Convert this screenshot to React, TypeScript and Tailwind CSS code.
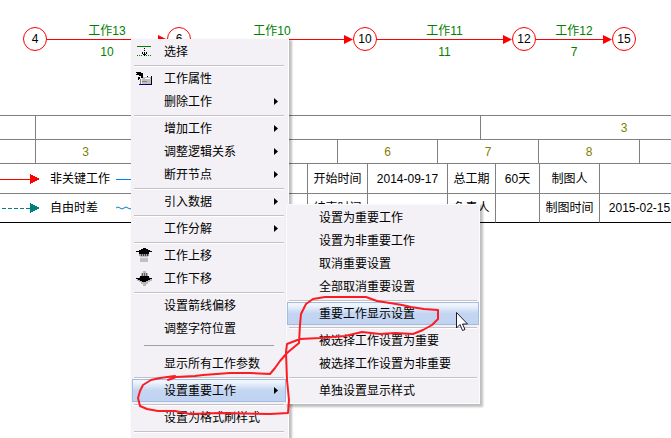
import { ReactNode } from 'react'
import clsx from 'clsx'

type Entry = {
    label?: string
    icon?: ReactNode
    submenu?: boolean
    active?: boolean
    divider?: 'normal' | 'wide'
}

const SelectIcon = () => (
    <svg width="16" height="16" shapeRendering="crispEdges">
        <path d="M1 2.5h14" stroke="#008000" />
        <path d="M1 11.5h1m1 0h1m1 0h1m4 0h1m1 0h1m1 0h1" stroke="#008000" />
        <path d="M8.5 4v1m0 1v1m0 1v4M6 8.5h1m3 0h1M6 9.5h1m3 0h1M7 10.5h3" stroke="#000" />
    </svg>
)

const PropertiesIcon = () => (
    <svg width="17" height="16" shapeRendering="crispEdges">
        <path d="M6 6h10v7H6z" fill="#c0c0c0" />
        <path d="M8 5.5h7M9 7.5h5" stroke="#fff" />
        <path d="M0 1h5v1h2v5H5V5H3V4H0V3h1V2H0z" fill="#000" />
        <path d="M2 6h2v2H3v1H2zM11 5h1v1h-1zM15 5h1v9h-1z" fill="#000" />
        <path d="M4.5 8v5M6 10.5h5" stroke="#808080" />
        <path d="M3 13.5h12" stroke="#000" />
        <path d="M3 13.5h2m2 0h3m2 0h2" stroke="#0000c0" />
    </svg>
)

const MoveUpIcon = () => (
    <svg width="16" height="16" shapeRendering="crispEdges">
        <path d="M4 7h8v7H4z" fill="#c0c0c0" />
        <path d="M3 6h10v2H3z" fill="#a0a0a0" />
        <path d="M7 0h3v1h2v1h2v1h2v1h-3v2H3V4H0V3h3V2h2V1h2z" fill="#000" />
        <path d="M5.5 6v2m2-2v2m2-2v2m2-2v2" stroke="#404040" />
        <path d="M4 9.5h8" stroke="#e4e4e4" />
    </svg>
)

const MoveDownIcon = () => (
    <svg width="16" height="16" shapeRendering="crispEdges">
        <path d="M7 0h3v2h2v4h2v2h2v2h-2v1h-2v2h-2v2H7v-2H5v-2H3v-1H1V8h2V6h2V2h2z" fill="#b8b8b8" />
        <path d="M4 5h9v2h3v1h-2v1h-2v1h-2v1H6v-1H4V9H2V8H0V7h4z" fill="#000" />
        <path d="M6.5 2v3m2-3v3m2-3v3" stroke="#606060" />
    </svg>
)

const mainMenu: Entry[] = [
    { label: '选择', icon: <SelectIcon /> },
    { divider: 'normal' },
    { label: '工作属性', icon: <PropertiesIcon /> },
    { label: '删除工作', submenu: true },
    { divider: 'normal' },
    { label: '增加工作', submenu: true },
    { label: '调整逻辑关系', submenu: true },
    { label: '断开节点', submenu: true },
    { divider: 'normal' },
    { label: '引入数据', submenu: true },
    { divider: 'normal' },
    { label: '工作分解', submenu: true },
    { divider: 'normal' },
    { label: '工作上移', icon: <MoveUpIcon /> },
    { label: '工作下移', icon: <MoveDownIcon /> },
    { divider: 'normal' },
    { label: '设置箭线偏移' },
    { label: '调整字符位置' },
    { divider: 'wide' },
    { label: '显示所有工作参数' },
    { divider: 'normal' },
    { label: '设置重要工作', submenu: true, active: true },
    { divider: 'normal' },
    { label: '设置为格式刷样式' },
    { divider: 'normal' },
]

const importantMenu: Entry[] = [
    { label: '设置为重要工作' },
    { label: '设置为非重要工作' },
    { label: '取消重要设置' },
    { label: '全部取消重要设置' },
    { divider: 'normal' },
    { label: '重要工作显示设置', active: true },
    { divider: 'normal' },
    { label: '被选择工作设置为重要' },
    { label: '被选择工作设置为非重要' },
    { divider: 'normal' },
    { label: '单独设置显示样式' },
]

const Menu = ({ entries, className }: { entries: Entry[]; className: string }) => (
    <div
        role="menu"
        className={clsx(
            'absolute bg-[#f3f1f5] shadow-[2px_2px_2px_1px_rgba(0,0,0,0.25)]',
            className
        )}
    >
        {entries.map(({ label, icon, submenu, active, divider }, i) =>
            divider ? (
                <div
                    key={i}
                    role="separator"
                    className={
                        divider === 'wide' ? 'h-3 px-3 pt-[5px]' : 'h-1 px-[2px] pt-[2px]'
                    }
                >
                    <div
                        className={clsx(
                            'border-t',
                            divider === 'wide'
                                ? 'border-[#a0a0a0]'
                                : 'h-[2px] border-[#c4c2c6] bg-white'
                        )}
                    />
                </div>
            ) : (
                <button
                    key={i}
                    type="button"
                    role="menuitem"
                    className={clsx(
                        'flex h-[23px] w-full items-center border pr-[7px] text-left whitespace-nowrap',
                        active
                            ? 'border-[#a3bbdf] bg-linear-to-b from-[#eff5fd] from-10% via-[#c3d5f1] via-50% to-[#c0d3f1]'
                            : 'border-transparent'
                    )}
                >
                    <span className="flex w-[31px] shrink-0 pl-[3px]">{icon}</span>
                    <span className="grow">{label}</span>
                    {submenu && (
                        <svg width="4" height="7" className="shrink-0">
                            <path d="M0 0l4 3.5L0 7z" />
                        </svg>
                    )}
                </button>
            )
        )}
    </div>
)

const Node = ({ children }: { children: ReactNode }) => (
    <div className="flex size-6 shrink-0 items-center justify-center rounded-full border border-[#f00]">
        {children}
    </div>
)

const Edge = ({
    name,
    days,
    className,
}: {
    name: string
    days?: string
    className: string
}) => (
    <div className={clsx('shrink-0 text-center text-[#008000]', className)}>
        <div className="h-4 leading-6">{name}</div>
        <div className="flex h-[9px] items-center">
            <div className="h-px grow bg-[#f00]" />
            <svg width="9" height="9">
                <path d="M0 0l9 4.5L0 9z" fill="#f00" />
            </svg>
        </div>
        <div className="h-[15px] leading-4">{days}</div>
    </div>
)

const Scale = ({ cells }: { cells: [string, string][] }) => (
    <div className="flex h-6 border-t border-[#808080] text-[#808000]">
        {cells.map(([text, width], i) => (
            <div
                key={i}
                className={clsx(
                    'flex shrink-0 items-center justify-center border-r border-[#808080]',
                    width
                )}
            >
                {text}
            </div>
        ))}
    </div>
)

const InfoRow = ({
    legend,
    cells,
    last,
}: {
    legend: ReactNode
    cells: string[]
    last?: boolean
}) => {
    const line = clsx(
        'border-t border-t-[#808080] p-0',
        last && 'border-b border-b-black'
    )

    return (
        <tr className="h-[30px]">
            <td className={line}>{legend}</td>
            {cells.map((text, i) =>
                i % 2 ? (
                    <td key={i} className={clsx(line, 'border-l border-l-[#808080] text-center')}>
                        {text}
                    </td>
                ) : (
                    <th
                        key={i}
                        scope="row"
                        className={clsx(line, 'border-l border-l-[#808080] text-center font-normal')}
                    >
                        {text}
                    </th>
                )
            )}
        </tr>
    )
}

const App = () => {
    return (
        <div className="relative h-screen overflow-hidden bg-white font-['Liberation_Sans','Noto_Sans_CJK_SC',sans-serif] text-[12px] leading-4 text-black">
            <main>
                <div className="flex h-[115px] items-start pt-[19px] pl-[23px]">
                    <div className="flex items-center">
                        <Node>4</Node>
                        <Edge name="工作13" days="10" className="w-[120px]" />
                        <Node>6</Node>
                        <Edge name="工作10" className="w-[162px]" />
                        <Node>10</Node>
                        <Edge name="工作11" days="11" className="w-[135px]" />
                        <Node>12</Node>
                        <Edge name="工作12" days="7" className="w-[76px]" />
                        <Node>15</Node>
                    </div>
                </div>

                <Scale
                    cells={[
                        ['', 'w-9'],
                        ['', 'w-[445px]'],
                        ['3', 'w-[287px]'],
                    ]}
                />
                <Scale
                    cells={[
                        ['', 'w-9'],
                        ['3', 'w-[100px]'],
                        ['', 'w-[101px]'],
                        ['', 'w-[101px]'],
                        ['6', 'w-[100px]'],
                        ['7', 'w-[101px]'],
                        ['8', 'w-[101px]'],
                        ['', 'w-[100px]'],
                    ]}
                />

                <table className="w-[679px] table-fixed border-separate border-spacing-0">
                    <colgroup>
                        <col className="w-[307px]" />
                        <col className="w-[60px]" />
                        <col className="w-[80px]" />
                        <col className="w-[48px]" />
                        <col className="w-[44px]" />
                        <col className="w-[60px]" />
                        <col className="w-[80px]" />
                    </colgroup>
                    <tbody>
                        <InfoRow
                            legend={
                                <div className="flex items-center">
                                    <svg width="40" height="10" shapeRendering="crispEdges">
                                        <path d="M0 5.5h32" stroke="#f00" />
                                        <path d="M30 0l10 5-10 5z" fill="#f00" />
                                    </svg>
                                    <span className="w-[66px] pl-[10px] whitespace-nowrap">
                                        非关键工作
                                    </span>
                                    <svg width="40" height="10" className="ml-[10px]" shapeRendering="crispEdges">
                                        <path d="M0 5.5h40" stroke="#0080ff" />
                                    </svg>
                                </div>
                            }
                            cells={['开始时间', '2014-09-17', '总工期', '60天', '制图人', '']}
                        />
                        <InfoRow
                            last
                            legend={
                                <div className="flex items-center">
                                    <svg width="40" height="10" shapeRendering="crispEdges">
                                        <path d="M2 5.5h28" stroke="#008080" strokeDasharray="4 2" />
                                        <path d="M30 0l10 5-10 5z" fill="#008080" />
                                    </svg>
                                    <span className="w-[66px] pl-[10px] whitespace-nowrap">
                                        自由时差
                                    </span>
                                    <svg width="40" height="10" className="ml-[10px]" fill="none">
                                        <path
                                            d="M0 5q2-2 4 0t4 0t4 0t4 0t4 0t4 0"
                                            stroke="#0080c0"
                                        />
                                    </svg>
                                </div>
                            }
                            cells={['结束时间', '', '负责人', '', '制图时间', '2015-02-15']}
                        />
                    </tbody>
                </table>
            </main>

            <Menu
                entries={mainMenu}
                className="top-[39px] left-[131px] w-[158px] border-r border-white pt-px pr-[2px] pb-6 pl-px"
            />
            <Menu
                entries={importantMenu}
                className="top-[204px] left-[286px] w-[194px] border border-[#fbfafc] py-px"
            />

            {/* hand-drawn marker */}
            <svg
                width="671"
                height="438"
                className="pointer-events-none absolute top-0 left-0"
                fill="none"
                stroke="#fb1c24"
                strokeWidth="2"
                strokeLinejoin="round"
                strokeLinecap="round"
            >
                <path d="M168 380L176 377L195 376L203 375L230 373L250 373L270 374L275 368L280 361L287 353L299 343L300 325L301 314L306 304L313 299L325 297L350 297L366 297L377 301L390 303L402 305L411 307L424 309L438 310L438 319L432 325L423 330L413 334L395 333L380 334L362 332L345 336L320 338L300 339L287 344L286 352L287 380L289 400L288 413L270 414L220 413L190 414L175 411L158 411L147 409L140 406L138 398L140 391L143 385L151 380L160 378L175 376" />
            </svg>

            <svg width="13" height="20" className="pointer-events-none absolute top-[312px] left-[456px]">
                <path
                    d="M.5.5v15.5l3.5-3.5 2.5 6 2.5-1-2.5-5.5h5z"
                    fill="#fff"
                    stroke="#1c1c30"
                />
            </svg>
        </div>
    )
}

export default App
